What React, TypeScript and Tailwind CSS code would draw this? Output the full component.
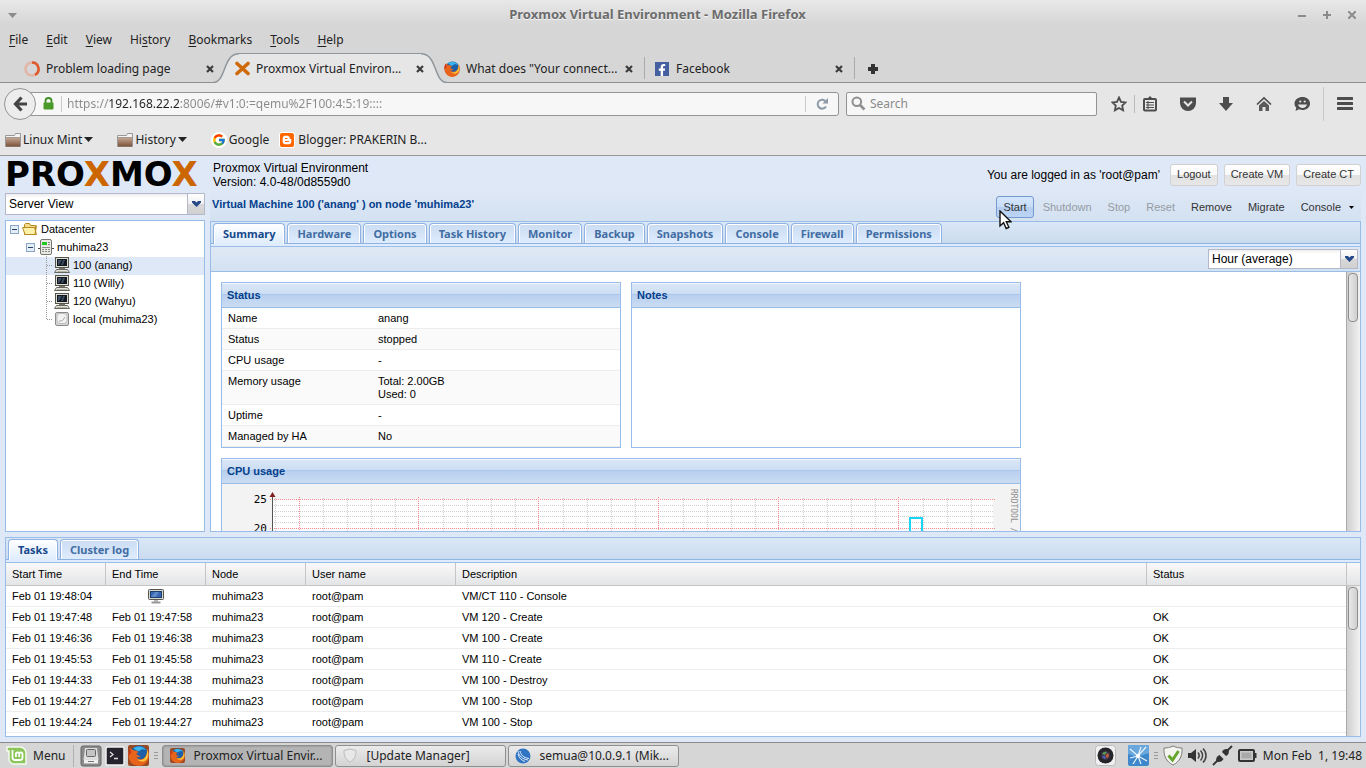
import type { ReactNode } from "react";
import { FaBlogger, FaFacebookF } from "react-icons/fa";
import { FcGoogle } from "react-icons/fc";

const menus = ["File", "Edit", "View", "Hi_story", "Bookmarks", "Tools", "Help"];

const vmTabs = [
  "Summary",
  "Hardware",
  "Options",
  "Task History",
  "Monitor",
  "Backup",
  "Snapshots",
  "Console",
  "Firewall",
  "Permissions",
];

const tasks = [
  { start: "Feb 01 19:48:04", end: "", desc: "VM/CT 110 - Console", status: "" },
  { start: "Feb 01 19:47:48", end: "Feb 01 19:47:58", desc: "VM 120 - Create", status: "OK" },
  { start: "Feb 01 19:46:36", end: "Feb 01 19:46:38", desc: "VM 100 - Create", status: "OK" },
  { start: "Feb 01 19:45:53", end: "Feb 01 19:45:58", desc: "VM 110 - Create", status: "OK" },
  { start: "Feb 01 19:44:33", end: "Feb 01 19:44:38", desc: "VM 100 - Destroy", status: "OK" },
  { start: "Feb 01 19:44:27", end: "Feb 01 19:44:28", desc: "VM 100 - Stop", status: "OK" },
  { start: "Feb 01 19:44:24", end: "Feb 01 19:44:27", desc: "VM 100 - Stop", status: "OK" },
];

const statusRows = [
  ["Name", "anang"],
  ["Status", "stopped"],
  ["CPU usage", "-"],
  ["Memory usage", "Total: 2.00GB\nUsed: 0"],
  ["Uptime", "-"],
  ["Managed by HA", "No"],
];

/* ---------- icons ---------- */

function FirefoxIcon({ size = 16 }: { size?: number }) {
  return (
    <svg width={size} height={size} viewBox="0 0 16 16" className="shrink-0">
      <circle cx="8.4" cy="7.4" r="7" fill="#1d5fa8" />
      <path d="M4 2.5C7 .2 12 .6 14 4c-2-1-4-1-5 .5C7.500 5 6 4 4 2.500z" fill="#39b6ee" />
      <path
        d="M1.600 2.500C.2 5 0 8 .8 10.500 2 14 5 16 8.400 15.900c4.200-.1 7.300-3.300 7.500-7.600.1-2-.4-3.800-1.400-5.100.3 3-.5 5.500-2.500 6.800-2 1.300-4.600.9-5.600-.7 1.300.3 2.400-.1 3.300-.9-1.500.1-2-.6-3-1.100-.4-.7.100-1.500 1.400-1.800C7 4.400 5.800 4 5 4.300 4.200 4 3 3.600 1.600 2.500z"
        fill="#e8641b"
      />
      <path
        d="M14.500 3.200c.3 3-.3 5.700-2.300 7.200-1.400 1.100-3.500 1.300-5 .5 1.600 2.200 5.300 2.500 7.300-.3 1.200-2 1.200-4.900 0-7.400z"
        fill="#fbc73a"
      />
      <path d="M1.600 2.500C.5 4.500.2 6.800.6 9c.5-1.600 1-2.500 2.200-3.300-.6-.9-1-2-1.200-3.200z" fill="#c8351a" />
    </svg>
  );
}

function CloseX() {
  return (
    <svg width="8" height="8" viewBox="0 0 8 8">
      <path d="M1 1l6 6M7 1L1 7" stroke="#3c3c3c" strokeWidth="2.200" />
    </svg>
  );
}

function FolderMark() {
  return (
    <svg width="16" height="14" viewBox="0 0 16 14" className="shrink-0">
      <defs>
        <linearGradient id="folder" x1="0" y1="0" x2="0" y2="1">
          <stop offset="0" stopColor="#c3a591" />
          <stop offset="1" stopColor="#7a5038" />
        </linearGradient>
      </defs>
      <path d="M.5 13.500v-11h9l1-2h5v13z" fill="#f4f4f4" stroke="#999" />
      <path d="M1 5h14v8.500H1z" fill="url(#folder)" />
      <path d="M0 4.500h16" stroke="#a99a90" />
    </svg>
  );
}

function Triangle() {
  return (
    <svg width="9" height="5" viewBox="0 0 9 5">
      <path d="M0 0h9L4.500 5z" fill="#222" />
    </svg>
  );
}

function Minus() {
  return (
    <svg width="9" height="9" viewBox="0 0 9 9" className="shrink-0">
      <rect x=".5" y=".5" width="8" height="8" fill="#e4ecf6" stroke="#8ba5c4" />
      <path d="M2 4.500h5" stroke="#24406b" />
    </svg>
  );
}

function FolderOpen() {
  return (
    <svg width="16" height="14" viewBox="0 0 16 14" className="shrink-0">
      <path d="M2.500 12.500v-10l1-1h4l1 2h5v9z" fill="#f7dd8b" stroke="#b58a1e" />
      <path d="M.6 5.500h11.900l2 7H3z" fill="#fdf0a8" stroke="#b58a1e" />
      <path d="M13 12.500l1.500-9" stroke="#b58a1e" />
    </svg>
  );
}

function ServerIcon() {
  return (
    <svg width="16" height="16" viewBox="0 0 16 16" className="shrink-0">
      <path d="M0 9.500h2M14 9.500h2" stroke="#444" />
      <rect x="2.500" y=".5" width="11" height="15" rx="1.500" fill="#e9e9e4" stroke="#77776f" />
      <rect x="4" y="3" width="5" height="3" fill="#1fc81f" />
      <path d="M10 3.500h2M10 5.500h2M4 8.500h8M4 10.500h2M7 10.500h2M10 10.500h2M4 12.500h2M7 12.500h2M10 12.500h2" stroke="#888" />
    </svg>
  );
}

function ComputerIcon() {
  return (
    <svg width="16" height="16" viewBox="0 0 16 16" className="shrink-0">
      <rect x="1.500" y=".5" width="13" height="10" fill="#ddddd2" stroke="#55554d" />
      <rect x="3" y="2" width="10" height="7" fill="#111820" />
      <path d="M4 3l4 0-3 5H4zM9 3h2L9 8H7z" fill="#3d4c60" />
      <path d="M5 11h6v1.500H5z" fill="#77776c" />
      <path d="M2.500 12.500h11l2 3H.5z" fill="#e3e3da" stroke="#66665c" />
      <path d="M3 14.500h10" stroke="#b5b5aa" />
    </svg>
  );
}

function DiskIcon() {
  return (
    <svg width="14" height="14" viewBox="0 0 14 14" className="shrink-0">
      <rect x=".5" y=".5" width="13" height="13" rx="1.500" fill="#d6d6d6" stroke="#8b8b8b" />
      <rect x="2" y="1.500" width="10" height="10" rx="3" fill="#f2f2f2" stroke="#bdbdbd" />
      <path d="M4 9c3 .5 5-1 5.500-4" stroke="#aaa" fill="none" />
    </svg>
  );
}

function ScreenIcon() {
  return (
    <svg width="16" height="15" viewBox="0 0 16 15" className="mx-auto">
      <rect x=".5" y=".5" width="15" height="10" rx="1" fill="#d8d8d0" stroke="#55574f" />
      <rect x="2.500" y="2.500" width="11" height="6" fill="#3566ae" stroke="#1f3f73" />
      <path d="M3 8l4-5h4L8 8z" fill="#5c88c8" />
      <path d="M6 11h4v2H6z" fill="#bbb" />
      <path d="M3.500 13.500h9" stroke="#999" strokeWidth="2" />
    </svg>
  );
}

function TreeDots({ last }: { last?: boolean }) {
  return (
    <svg width="16" height="18" viewBox="0 0 16 18" className="shrink-0">
      <path d={last ? "M8.500 0V9" : "M8.500 0V18"} stroke="#999" strokeDasharray="1 1" />
      <path d="M9 9.500h6" stroke="#999" strokeDasharray="1 1" />
    </svg>
  );
}

/* ---------- small parts ---------- */

function BrowserTab({ icon, title, active, line }: { icon: ReactNode; title: string; active?: boolean; line?: boolean }) {
  return (
    <div className="relative flex h-full w-[210px] items-center">
      {active && (
        <div className="absolute top-0 -right-3 -bottom-px -left-3 flex">
          <svg width="26" height="30" viewBox="0 0 26 30" className="shrink-0">
            <path d="M0 30C14 30 8 1 26 1V30z" fill="#e6e6e6" />
            <path d="M0 29.500C14 29 9 1 26 .8" fill="none" stroke="#8f969c" strokeWidth="1.500" />
          </svg>
          <div className="flex-1 border-t border-[#8f969c] bg-[#e6e6e6]" />
          <svg width="26" height="30" viewBox="0 0 26 30" className="shrink-0">
            <path d="M26 30C12 30 18 1 0 1V30z" fill="#e6e6e6" />
            <path d="M26 29.500C12 29 17 1 0 .8" fill="none" stroke="#8f969c" strokeWidth="1.500" />
          </svg>
        </div>
      )}
      <div className={`relative flex h-[22px] flex-1 items-center pt-[2px] pl-[9px] ${line ? "border-r border-[#aaa]" : ""}`}>
        <span className="flex w-4 justify-center">{icon}</span>
        <span className="ml-[6px] flex-1 whitespace-nowrap">{title}</span>
        <button aria-label="Close tab" className="mr-[11px]">
          <CloseX />
        </button>
      </div>
    </div>
  );
}

function TabButton({ label, active }: { label: string; active?: boolean }) {
  return (
    <button
      className={`rounded-t border border-b-0 border-[#8db2e3] px-[9px] font-['Noto_Sans',sans-serif] text-[11px] leading-5 font-bold whitespace-nowrap shadow-[inset_0_1px_0_#fff,inset_1px_0_0_#fff,inset_-1px_0_0_#fff] ${
        active
          ? "h-[21px] bg-linear-to-b from-white to-[#deecfd] text-[#15498b]"
          : "h-5 bg-linear-to-b from-[#cbdcf2] to-[#deecfd] text-[#416da3]"
      }`}
    >
      {label}
    </button>
  );
}

function TabStrip({ tabs, active }: { tabs: string[]; active: string }) {
  return (
    <div className="shrink-0 border-b border-[#99bce8] bg-[#deecfd]">
      <div className="flex h-[22px] items-start gap-[2px] border-b border-[#8db2e3] bg-linear-to-b from-[#dae7f6] to-[#cbdbef] px-[2px] pt-px">
        {tabs.map((t) => (
          <TabButton key={t} label={t} active={t === active} />
        ))}
      </div>
      <div className="h-[2px]" />
    </div>
  );
}

function ComboArrow() {
  return (
    <span className="pointer-events-none absolute inset-y-0 right-0 flex w-[18px] items-center justify-center border border-[#b5b8c8] bg-[linear-gradient(#fff,#f0f0f0_48%,#d8d8d8_52%,#d0d0d0)]">
      <svg width="9" height="6" viewBox="0 0 9 6">
        <path d="M0 0h3l1.500 1.500L6 0h3v1.500L4.500 6 0 1.500z" fill="#27498a" />
      </svg>
    </span>
  );
}

function PanelTitle({ children }: { children: ReactNode }) {
  return (
    <h2 className="h-[25px] border-b border-[#99bce8] bg-[linear-gradient(#dae7f6,#cddef3_45%,#abc7ec_46%,#abc7ec_50%,#b8cfee_51%,#cbddf3)] px-[5px] text-[11px] leading-6 font-bold text-[#04408c] shadow-[inset_0_1px_0_#f0f6fc]">
      {children}
    </h2>
  );
}

function PveButton({ children }: { children: ReactNode }) {
  return (
    <button className="h-[22px] rounded-[3px] border border-[#d1d1d1] bg-[linear-gradient(#fff,#f9f9f9_48%,#e2e2e2_52%,#e7e7e7)] px-[6px] text-[11px] text-[#333]">
      {children}
    </button>
  );
}

function ScrollTrack({ thumb }: { thumb: string }) {
  return (
    <div className="w-[14px] flex-1 border-l border-[#aaa] bg-linear-to-r from-[#d0d0d0] to-[#f2f2f2] pt-px pl-px">
      <div className={`w-[10px] rounded-[4px] border border-[#8e8e8e] bg-linear-to-r from-[#e8e8e8] to-[#cfcfcf] ${thumb}`} />
    </div>
  );
}

const minorLines = Array.from({ length: 30 }, (_, i) => 275 + i * 24);
const majorLines = [299, 418, 538, 658, 778, 898];

function CpuChart() {
  return (
    <svg width="798" height="200" viewBox="222 484 798 200" className="block">
      <rect x="222" y="484" width="798" height="200" fill="#f3f3f3" />
      <rect x="273" y="499" width="720" height="185" fill="#fff" />
      {minorLines
        .filter((_, i) => i % 5 !== 1)
        .map((x) => (
          <path key={x} d={`M${x}.5 498V684`} stroke="#cfcfcf" strokeDasharray="1 1" />
        ))}
      {[505, 511, 516, 522, 534].map((y) => (
        <path key={y} d={`M272 ${y}.5H994`} stroke="#cfcfcf" strokeDasharray="1 1" />
      ))}
      {majorLines.map((x) => (
        <path key={x} d={`M${x}.5 497V684`} stroke="#f58a8a" strokeDasharray="1 1" />
      ))}
      <path d="M270 499.500H995" stroke="#f58a8a" strokeDasharray="1 1" />
      <path d="M270 528.500H995" stroke="#f58a8a" strokeDasharray="1 1" />
      <path d="M272.500 496V684" stroke="#555" />
      <path d="M269.500 497h6l-3-5z" fill="#801f1f" />
      <path d="M910 684V518h12v166" fill="none" stroke="#1cd5f5" strokeWidth="2" />
      <g fontFamily="'DejaVu Sans Mono', monospace">
        <text x="267" y="503" fontSize="11" textAnchor="end">25</text>
        <text x="267" y="532" fontSize="11" textAnchor="end">20</text>
        <text fontSize="8" fill="#8f8f8f" transform="translate(1011 489) rotate(90)">
          RRDTOOL /
        </text>
      </g>
    </svg>
  );
}

function NavIcon({ label, children, className = "" }: { label: string; children: ReactNode; className?: string }) {
  return (
    <button aria-label={label} className={`flex items-center justify-center ${className}`}>
      <svg width="16" height="16" viewBox="0 0 16 16">
        {children}
      </svg>
    </button>
  );
}

/* ---------- browser chrome ---------- */

function BrowserChrome() {
  return (
    <header className="shrink-0 border-b border-[#999] bg-[#e6e6e6] text-xs text-[#222]">
      <div className="border-b border-[#8f8f8f] bg-linear-to-b from-[#e8e8e8] to-[#d6d6d6] to-30%">
        <div className="flex h-[30px] items-center px-[8px] text-[#777]">
          <svg width="9" height="5" viewBox="0 0 9 5">
            <path d="M0 0h9L4.500 5z" fill="#8b8b8b" />
          </svg>
          <h1 className="flex-1 px-[34px] text-center text-[13px] font-bold text-[#6c6c6c] [text-shadow:0_1px_0_#f4f4f4]">
            Proxmox Virtual Environment - Mozilla Firefox
          </h1>
          <div className="flex gap-[17px] pr-[2px]">
            <button aria-label="Minimize">
              <svg width="8" height="8" viewBox="0 0 8 8"><path d="M0 5h8" stroke="#8b8b8b" strokeWidth="2" /></svg>
            </button>
            <button aria-label="Maximize">
              <svg width="8" height="8" viewBox="0 0 8 8"><path d="M0 4h8M4 0v8" stroke="#8b8b8b" strokeWidth="2" /></svg>
            </button>
            <button aria-label="Close">
              <svg width="8" height="8" viewBox="0 0 8 8"><path d="M0 0l8 8M8 0L0 8" stroke="#8b8b8b" strokeWidth="2" /></svg>
            </button>
          </div>
        </div>
        <nav className="flex h-[23px] items-start gap-[18px] px-[9px]">
          {menus.map((m) => {
            const [before, rest] = m.includes("_") ? m.split("_") : ["", m];
            return (
              <button key={m} className="leading-5">
                {before}
                <span className="underline underline-offset-2">{rest[0]}</span>
                {rest.slice(1)}
              </button>
            );
          })}
        </nav>
        <div className="flex h-[29px] items-center pl-[15px]">
          <BrowserTab
            title="Problem loading page"
            icon={
              <svg width="16" height="16" viewBox="0 0 16 16">
                <circle cx="8" cy="8" r="6.500" fill="none" stroke="#e3b5a5" strokeWidth="2.500" />
                <path d="M8 1.500a6.500 6.500 0 0 1 3 12.300" fill="none" stroke="#dd5a2c" strokeWidth="2.500" />
              </svg>
            }
          />
          <BrowserTab
            active
            title="Proxmox Virtual Environ..."
            icon={
              <svg width="15" height="15" viewBox="0 0 15 15">
                <path d="M2 2.500l11 10M13 2.500l-11 10" stroke="#cf6a0b" strokeWidth="3.600" strokeLinecap="round" />
              </svg>
            }
          />
          <BrowserTab line title={'What does "Your connect...'} icon={<FirefoxIcon />} />
          <BrowserTab
            line
            title="Facebook"
            icon={
              <span className="flex size-[14px] items-end justify-center bg-[#4460a0]">
                <FaFacebookF color="#fff" size={12} />
              </span>
            }
          />
          <button aria-label="New tab" className="ml-[13px] pt-[2px]">
            <svg width="10" height="10" viewBox="0 0 10 10">
              <path d="M5 0v10M0 5h10" stroke="#333" strokeWidth="4" />
            </svg>
          </button>
        </div>
      </div>

      <div className="flex h-[41px] items-center pl-1">
        <button
          aria-label="Back"
          className="relative z-10 flex size-8 shrink-0 items-center justify-center rounded-full border border-[#949494] bg-[#ededed]"
        >
          <svg width="15" height="16" viewBox="0 0 15 16">
            <path d="M8.500 1.500L2.500 8l6 6.500M3 8h11" fill="none" stroke="#444" strokeWidth="3.200" />
          </svg>
        </button>
        <div className="-ml-3 flex h-6 flex-1 items-center rounded-r-[3px] border border-[#949494] bg-[#f7f7f7] pl-[18px]">
          <svg width="11" height="13" viewBox="0 0 11 13" className="shrink-0">
            <path d="M2.500 6V4a3 3 0 0 1 6 0v2" fill="none" stroke="#3f8d23" strokeWidth="1.800" />
            <rect x=".5" y="5.500" width="10" height="7" rx="1" fill="#4a9a2a" />
          </svg>
          <span className="ml-[7px] h-4 w-px bg-[#ccc]" />
          <input
            aria-label="Address"
            readOnly
            value="https://192.168.22.2:8006/#v1:0:=qemu%2F100:4:5:19::::"
            className="ml-[5px] min-w-0 flex-1 bg-[linear-gradient(to_right,#8a8a8a_41px,#222_41px,#222_112px,#8a8a8a_112px)] bg-clip-text text-transparent outline-none"
          />
          <span className="h-4 w-px bg-[#ccc]" />
          <button aria-label="Reload" className="px-[10px]">
            <svg width="12" height="12" viewBox="0 0 12 12">
              <path d="M9.800 3.500A4.500 4.500 0 1 0 10 8.500" fill="none" stroke="#8d9aa8" strokeWidth="2" />
              <path d="M12 0v5.500H6.500z" fill="#8d9aa8" />
            </svg>
          </button>
        </div>
        <label className="ml-[7px] flex h-6 w-[251px] items-center rounded-[2px] border border-[#949494] bg-[#f7f7f7] pl-[4px]">
          <svg width="15" height="15" viewBox="0 0 15 15">
            <circle cx="5.800" cy="5.800" r="4.300" fill="none" stroke="#8f8f8f" strokeWidth="2" />
            <path d="M9 9l4.500 4.500" stroke="#8f8f8f" strokeWidth="2.600" />
          </svg>
          <input placeholder="Search" aria-label="Search" className="ml-1 min-w-0 flex-1 outline-none placeholder:text-[#8a8a8a]" />
        </label>
        <NavIcon label="Bookmark" className="ml-[14px]">
          <path d="M8 1.500l2 4.300 4.600.6-3.400 3.200.9 4.700L8 12l-4.100 2.300.9-4.700L1.400 6.400 6 5.800z" fill="none" stroke="#4d4d4d" strokeWidth="1.800" />
        </NavIcon>
        <span className="ml-[7px] h-[18px] w-px bg-[#bbb]" />
        <NavIcon label="Show bookmarks" className="ml-[7px]">
          <rect x="2" y="3" width="12" height="11.500" rx="1" fill="none" stroke="#4d4d4d" strokeWidth="2" />
          <path d="M5 3l3-3 3 3z" fill="#4d4d4d" />
          <path d="M4 6.500h8M4 9h8M4 11.500h8M6 5v8" stroke="#4d4d4d" />
        </NavIcon>
        <NavIcon label="Pocket" className="ml-[22px]">
          <path d="M0 1.500h16V7a8 8 0 0 1-16 0z" fill="#4d4d4d" />
          <path d="M4 5.500l4 4 4-4" fill="none" stroke="#e6e6e6" strokeWidth="2" />
        </NavIcon>
        <NavIcon label="Downloads" className="ml-[22px]">
          <path d="M5 1h6v6h4l-7 8-7-8h4z" fill="#4d4d4d" />
        </NavIcon>
        <NavIcon label="Home" className="ml-[22px]">
          <path d="M1 8.500L8 2l7 6.500" fill="none" stroke="#4d4d4d" strokeWidth="1.700" />
          <path d="M3 9.500l5-4.500 5 4.500V15H9.500v-4h-3v4H3z" fill="#5a5a5a" />
        </NavIcon>
        <NavIcon label="Chat" className="ml-[22px]">
          <path d="M8.500 1C12.500 1 16 3.500 16 7.500S12.500 14 8.500 14c-1.200 0-2.500-.2-3.500-.7L1.500 15l.8-3.300C1 10.500.5 9 .5 7.500.5 3.500 4.500 1 8.500 1z" fill="#4d4d4d" />
          <path d="M4 8.500h9c-.5 2.300-2.300 3.500-4.500 3.500S4.500 10.800 4 8.500z" fill="#e6e6e6" />
          <circle cx="6.300" cy="5.500" r="1.100" fill="#e6e6e6" />
          <circle cx="10.700" cy="5.500" r="1.100" fill="#e6e6e6" />
        </NavIcon>
        <span className="ml-[13px] h-[34px] w-px bg-[#c8c8c8]" />
        <NavIcon label="Menu" className="mr-[13px] ml-[13px]">
          <path d="M1 2.500h14M1 7.500h14M1 12.500h14" stroke="#4d4d4d" strokeWidth="3" strokeLinecap="round" />
        </NavIcon>
      </div>

      <nav className="flex h-[31px] items-center pl-[5px]">
        <button className="flex items-center gap-[2px]">
          <FolderMark />
          Linux Mint
          <Triangle />
        </button>
        <button className="ml-6 flex items-center gap-[2px]">
          <FolderMark />
          History
          <Triangle />
        </button>
        <a href="#google" className="ml-6 flex items-center gap-[2px]">
          <span className="rounded-full bg-white p-px">
            <FcGoogle size={14} />
          </span>
          Google
        </a>
        <a href="#blogger" className="ml-[10px] flex items-center gap-[3px]">
          <span className="rounded-[3px] bg-white">
            <FaBlogger color="#ff6600" size={16} />
          </span>
          Blogger: PRAKERIN B...
        </a>
      </nav>
    </header>
  );
}

/* ---------- proxmox page ---------- */

function ResourceTree() {
  const row = "flex h-[18px] items-center pb-[2px]";
  return (
    <ul className="flex-1 overflow-hidden border border-[#99bce8] bg-white text-[11px] leading-[16px]">
      <li className={`${row} pl-1`}>
        <Minus />
        <span className="mr-[3px] ml-[3px]">
          <FolderOpen />
        </span>
        Datacenter
      </li>
      <li className={`${row} pl-5`}>
        <Minus />
        <span className="mr-[3px] ml-[3px]">
          <ServerIcon />
        </span>
        muhima23
      </li>
      {["100 (anang)", "110 (Willy)", "120 (Wahyu)"].map((vm, i) => (
        <li key={vm} className={`${row} pl-8 ${i === 0 ? "bg-[#dfe8f6]" : ""}`}>
          <TreeDots />
          <ComputerIcon />
          <span className="ml-[3px]">{vm}</span>
        </li>
      ))}
      <li className={`${row} pl-8`}>
        <TreeDots last />
        <span className="flex w-4 justify-center">
          <DiskIcon />
        </span>
        <span className="ml-[3px]">local (muhima23)</span>
      </li>
    </ul>
  );
}

function VmToolbar() {
  return (
    <div className="flex gap-[2px] text-[11px] text-[#333]">
      <button className="relative h-[22px] rounded-[3px] border border-[#7399cd] bg-[linear-gradient(#d3e5fb,#c9defa_48%,#b5cff2_52%,#bcd4f4)] px-[6px]">
        Start
        <svg width="13" height="20" viewBox="0 0 13 20" className="absolute top-[13px] left-[2px]">
          <path d="M1 1v15l3.600-3.300 2.600 5.800 2.700-1.200-2.600-5.600H12z" fill="#fff" stroke="#111" strokeWidth="1.400" />
        </svg>
      </button>
      {["Shutdown", "Stop", "Reset"].map((b) => (
        <button key={b} disabled className="h-[22px] px-[7px] text-[#959ba3]">
          {b}
        </button>
      ))}
      {["Remove", "Migrate"].map((b) => (
        <button key={b} className="h-[22px] px-[7px]">
          {b}
        </button>
      ))}
      <button className="flex h-[22px] items-center gap-2 px-[7px]">
        Console
        <svg width="5" height="3" viewBox="0 0 5 3">
          <path d="M0 0h5L2.500 3z" fill="#000" />
        </svg>
      </button>
    </div>
  );
}

function Summary() {
  return (
    <div className="flex min-h-0 flex-1">
      <div className="min-w-0 flex-1 overflow-hidden bg-white p-[10px]">
        <div className="flex items-stretch gap-[10px]">
          <section className="w-[400px] border border-[#99bce8]">
            <PanelTitle>Status</PanelTitle>
            <dl className="text-[11px] leading-[13px]">
              {statusRows.map(([k, v], i) => (
                <div key={k} className={`flex border-b border-[#ededed] px-[6px] pt-[4px] pb-[3px] ${i % 2 ? "bg-[#fafafa]" : ""}`}>
                  <dt className="w-[150px]">{k}</dt>
                  <dd className="whitespace-pre-line">{v}</dd>
                </div>
              ))}
            </dl>
          </section>
          <section className="w-[390px] border border-[#99bce8]">
            <PanelTitle>Notes</PanelTitle>
          </section>
        </div>
        <section className="mt-[10px] w-[800px] border border-[#99bce8]">
          <PanelTitle>CPU usage</PanelTitle>
          <CpuChart />
        </section>
      </div>
      <div className="flex">
        <ScrollTrack thumb="h-[49px]" />
      </div>
    </div>
  );
}

function TaskLog() {
  const th = "h-[23px] border-r border-b border-[#c5c5c5] px-[6px] text-left font-normal";
  const td = "h-[21px] border-b border-[#ededed] px-[6px] py-0 leading-[18px]";
  return (
    <section className="mx-[5px] mt-[5px] mb-[5px] shrink-0 border border-[#99bce8] bg-white text-[11px]">
      <TabStrip tabs={["Tasks", "Cluster log"]} active="Tasks" />
      <div className="flex pb-[3px]">
        <table className="flex-1 table-fixed border-separate border-spacing-0">
          <colgroup>
            <col className="w-[100px]" />
            <col className="w-[100px]" />
            <col className="w-[100px]" />
            <col className="w-[150px]" />
            <col />
            <col className="w-[200px]" />
          </colgroup>
          <thead className="bg-linear-to-b from-[#f9f9f9] to-[#e3e4e6]">
            <tr>
              {["Start Time", "End Time", "Node", "User name", "Description", "Status"].map((h) => (
                <th key={h} className={th}>
                  {h}
                </th>
              ))}
            </tr>
          </thead>
          <tbody>
            {tasks.map((t) => (
              <tr key={t.start}>
                <td className={td}>{t.start}</td>
                <td className={td}>{t.end || <ScreenIcon />}</td>
                <td className={td}>muhima23</td>
                <td className={td}>root@pam</td>
                <td className={td}>{t.desc}</td>
                <td className={td}>{t.status}</td>
              </tr>
            ))}
          </tbody>
        </table>
        <div className="-mb-[3px] flex w-[13px] flex-col">
          <div className="h-[23px] shrink-0 border-b border-[#c5c5c5] bg-linear-to-b from-[#f9f9f9] to-[#e3e4e6]" />
          <div className="-ml-px flex flex-1">
            <ScrollTrack thumb="h-[43px]" />
          </div>
        </div>
      </div>
    </section>
  );
}

function ProxmoxPage() {
  return (
    <main className="flex min-h-0 flex-1 flex-col bg-[#dfe8f6] font-['Liberation_Sans',Arial,sans-serif] text-xs text-black">
      <div className="flex min-h-0 flex-1 gap-[5px] px-[5px]">
        <div className="flex w-[200px] shrink-0 flex-col">
          <div className="h-[37px] font-['DejaVu_Sans',sans-serif] text-[34px] leading-[37px] font-bold">
            PRO<span className="text-[#cc6600]">X</span>MO<span className="text-[#cc6600]">X</span>
          </div>
          <div className="relative mb-[5px] h-[22px]">
            <select
              aria-label="View"
              className="h-full w-full appearance-none border border-[#b5b8c8] bg-white bg-linear-to-b from-[#eee] to-white to-20% px-[3px]"
            >
              <option>Server View</option>
            </select>
            <ComboArrow />
          </div>
          <ResourceTree />
        </div>

        <div className="flex min-w-0 flex-1 flex-col">
          <div className="flex h-[33px] shrink-0 items-center pt-[4px] pl-[3px]">
            <div className="leading-[14px]">
              <div>Proxmox Virtual Environment</div>
              <div>Version: 4.0-48/0d8559d0</div>
            </div>
            <div className="ml-auto flex items-center gap-[6px]">
              <span className="mr-1">You are logged in as 'root@pam'</span>
              <PveButton>Logout</PveButton>
              <PveButton>Create VM</PveButton>
              <PveButton>Create CT</PveButton>
            </div>
          </div>
          <div className="flex h-8 shrink-0 items-center justify-between bg-linear-to-b from-[#dfe8f6] to-[#d3e1f1] pt-[4px] pl-[2px]">
            <h2 className="pb-[5px] text-[11px] font-bold text-[#04408c]">Virtual Machine 100 ('anang' ) on node 'muhima23'</h2>
            <VmToolbar />
          </div>
          <section className="flex min-h-0 flex-1 flex-col border border-[#99bce8]">
            <TabStrip tabs={vmTabs} active="Summary" />
            <div className="flex h-[25px] shrink-0 items-center justify-end border-b border-[#99bce8] bg-linear-to-b from-[#dfe9f5] to-[#d3e1f1] pr-[2px]">
              <div className="relative h-5 w-[150px]">
                <select
                  aria-label="Time frame"
                  className="block h-full w-full appearance-none border border-[#b5b8c8] bg-white bg-linear-to-b from-[#eee] to-white to-20% px-[3px]"
                >
                  <option>Hour (average)</option>
                </select>
                <ComboArrow />
              </div>
            </div>
            <Summary />
          </section>
        </div>
      </div>
      <TaskLog />
    </main>
  );
}

/* ---------- desktop panel ---------- */

function Grip() {
  return (
    <svg width="4" height="8" viewBox="0 0 4 8" className="shrink-0">
      <path d="M0 .5h4M0 3.500h4M0 6.500h4" stroke="#999" />
    </svg>
  );
}

function WindowButton({ icon, title, active }: { icon: ReactNode; title: string; active?: boolean }) {
  return (
    <button
      className={`flex h-[22px] w-[171px] items-center rounded-[3px] border border-[#8f8f8f] pl-[6px] whitespace-nowrap ${
        active ? "bg-[#b4b4b4] shadow-[inset_0_0_2px_#777]" : "bg-linear-to-b from-[#ebebeb] to-[#d3d3d3]"
      }`}
    >
      <span className="flex w-4 justify-center">{icon}</span>
      <span className="ml-2">{title}</span>
    </button>
  );
}

function Taskbar() {
  return (
    <footer className="flex h-[26px] shrink-0 items-center border-t border-[#8a8a8a] bg-[#d6d6d6] pr-1 pl-[6px] text-xs text-[#222]">
      <button className="flex items-center gap-[6px]">
        <svg width="21" height="19" viewBox="0 0 21 19">
          <path d="M1 1h13a6 6 0 0 1 6 6v11H8a5 5 0 0 1-5-5V5H1z" fill="#8cc65a" stroke="#f4f9ee" strokeWidth="1.500" />
          <path d="M6.500 4v7.500a2.500 2.500 0 0 0 2.500 2.500h5a2.500 2.500 0 0 0 2.500-2.500V8a1.600 1.600 0 0 0-3.300 0v3M13.200 8a1.600 1.600 0 0 0-3.300 0v3" fill="none" stroke="#fff" strokeWidth="1.800" />
        </svg>
        Menu
      </button>
      <span className="ml-2 h-[22px] w-px bg-[#b0b0b0]" />
      <button aria-label="Files" className="ml-[6px]">
        <svg width="22" height="22" viewBox="0 0 22 22">
          <rect x="1" y="1" width="20" height="20" rx="2" fill="#8a8a8a" stroke="#666" />
          <path d="M5 3h12l1.500 12h-15z" fill="#ddd" />
          <rect x="6.500" y="4.500" width="9" height="7" rx="1" fill="#c4c4c4" stroke="#666" />
          <path d="M4 15h14v3.500H4z" fill="#efefef" />
          <path d="M8 16.500h6" stroke="#777" />
        </svg>
      </button>
      <button aria-label="Terminal" className="ml-[3px]">
        <svg width="20" height="20" viewBox="0 0 20 20">
          <rect x="1" y="1" width="18" height="18" rx="1.500" fill="#25222e" stroke="#f0f0f0" strokeWidth="1.500" />
          <path d="M5 6l3 2.500L5 11M9 12.500h4" fill="none" stroke="#ddd" strokeWidth="1.300" />
        </svg>
      </button>
      <button aria-label="Firefox" className="ml-[3px] rounded-[2px] bg-[#9a4a22]">
        <FirefoxIcon size={21} />
      </button>
      <span className="mr-1 ml-[5px]">
        <Grip />
      </span>
      <div className="flex gap-[2px]">
        <WindowButton
          active
          title="Proxmox Virtual Envir..."
          icon={
            <span className="rounded-[2px] bg-[#9a4a22]">
              <FirefoxIcon size={15} />
            </span>
          }
        />
        <WindowButton
          title="[Update Manager]"
          icon={
            <svg width="14" height="15" viewBox="0 0 14 15">
              <path d="M7 1l6 1.500c.3 5-1.500 9-6 11.500C2.500 11.500.7 7.500 1 2.500z" fill="#e8e8e8" stroke="#bbb" />
            </svg>
          }
        />
        <WindowButton
          title="semua@10.0.9.1 (Mik..."
          icon={
            <svg width="16" height="16" viewBox="0 0 16 16">
              <circle cx="8" cy="8" r="7.500" fill="#2f75c4" />
              <path d="M3 3c1 5 4 8 10 9M5 3c1 4 3 6.500 9 7.500M3 6c1 4 3 6 7 7.500" fill="none" stroke="#e3eefb" />
            </svg>
          }
        />
      </div>
      <div className="ml-auto flex items-center">
        <svg width="21" height="21" viewBox="0 0 21 21">
          <rect x=".5" y=".5" width="20" height="20" rx="3" fill="#f0f0f0" stroke="#bbb" />
          <circle cx="10.500" cy="10.500" r="8" fill="#24242a" />
          <circle cx="10.500" cy="10.500" r="4.500" fill="#3d3048" />
          <path d="M7 9a4 4 0 0 1 5-2l-2 3z" fill="#5b9a58" />
          <path d="M13 8a4 4 0 0 1-1 5.500l-1.500-3z" fill="#c05f3c" />
          <path d="M7 11a4 4 0 0 0 4 3l-1-3z" fill="#4a62b4" />
        </svg>
        <svg width="21" height="21" viewBox="0 0 21 21" className="ml-3">
          <rect width="21" height="21" rx="2" fill="#3f87cb" />
          <path d="M0 0h21v8L9 12 0 9z" fill="#6aa7dd" />
          <path d="M2 4l8 7 8-9M10 11l9 5M10 11L5 19M10 11l-8 2M13 2l-3 9 3 8" fill="none" stroke="#eaf4fd" strokeWidth="1.200" />
          <circle cx="10" cy="11" r="2" fill="#fff" />
        </svg>
        <span className="ml-[5px]">
          <Grip />
        </span>
        <svg width="20" height="21" viewBox="0 0 20 21" className="ml-[5px]">
          <path d="M10 1c3 1.500 6 2 9 2 .5 7.500-2 13.500-9 17C3 16.500.5 10.500 1 3c3 0 6-.5 9-2z" fill="#f4f4f0" stroke="#7d7d78" />
          <path d="M5.500 10.500l4 4.500 6-9" fill="none" stroke="#67a52f" strokeWidth="3" />
        </svg>
        <svg width="19" height="17" viewBox="0 0 19 17" className="ml-[5px]">
          <path d="M0 6h3l5-4v13l-5-4H0z" fill="#333" />
          <path d="M10 5.500c1.500 2 1.500 4 0 6M12.500 3.500c2.700 3 2.700 7 0 10M15 1.500c4 4 4 10 0 14" fill="none" stroke="#444" strokeWidth="1.600" />
        </svg>
        <svg width="21" height="21" viewBox="0 0 21 21" className="ml-[5px]">
          <path d="M1 20l5-5M15 6l5-5" stroke="#333" strokeWidth="1.800" />
          <path d="M4.500 16.500c-1-3 .5-5.500 3-6.500l4 4c-1.500 2.500-4 3.500-7 2.500zM16.500 4.500c-3-1-5.500 0-6.500 2.500l4 4c2.500-1 3.500-3.500 2.500-6.500z" fill="#333" />
        </svg>
        <svg width="19" height="13" viewBox="0 0 19 13" className="ml-[5px]">
          <rect x="1" y="1" width="15" height="11" rx="1" fill="#c9c9c9" stroke="#333" strokeWidth="2" />
          <rect x="3.500" y="3.500" width="10" height="6" fill="#a9a9a9" />
          <path d="M17.500 4v5" stroke="#333" strokeWidth="2" />
        </svg>
        <span className="ml-[6px] whitespace-pre">Mon Feb  1, 19:48</span>
      </div>
    </footer>
  );
}

export default function App() {
  return (
    <div className="flex h-screen flex-col overflow-hidden font-['Noto_Sans',sans-serif]">
      <BrowserChrome />
      <ProxmoxPage />
      <Taskbar />
    </div>
  );
}
